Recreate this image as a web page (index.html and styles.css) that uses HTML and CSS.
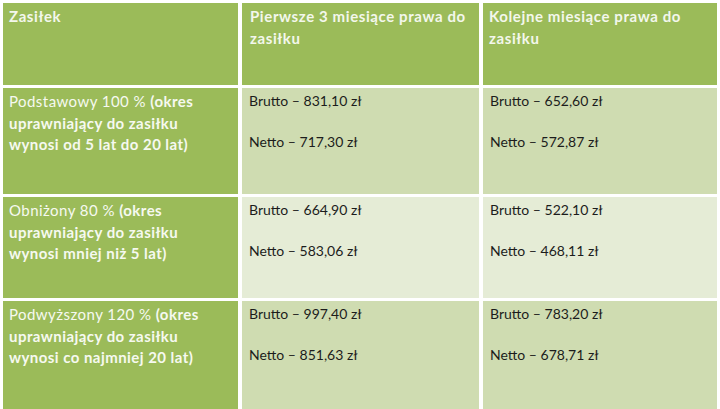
FILE: index.html
```html
<!DOCTYPE html>
<html lang="pl">
<head>
<meta charset="utf-8">
<link rel="stylesheet" href="styles.css">
</head>
<body>
<div class="table">
  <div class="cell head">Zasiłek</div>
  <div class="cell head">Pierwsze 3 miesiące prawa do zasiłku</div>
  <div class="cell head">Kolejne miesiące prawa do zasiłku</div>

  <div class="cell label">Podstawowy 100 % <b>(okres uprawniający do zasiłku wynosi od 5 lat do 20 lat)</b></div>
  <div class="cell data"><p>Brutto – 831,10 zł</p><p>Netto – 717,30 zł</p></div>
  <div class="cell data"><p>Brutto – 652,60 zł</p><p>Netto – 572,87 zł</p></div>

  <div class="cell label">Obniżony 80 % <b>(okres uprawniający do zasiłku wynosi mniej niż 5 lat)</b></div>
  <div class="cell data alt"><p>Brutto – 664,90 zł</p><p>Netto – 583,06 zł</p></div>
  <div class="cell data alt"><p>Brutto – 522,10 zł</p><p>Netto – 468,11 zł</p></div>

  <div class="cell label">Podwyższony 120 % <b>(okres uprawniający do zasiłku wynosi co najmniej 20 lat)</b></div>
  <div class="cell data"><p>Brutto – 997,40 zł</p><p>Netto – 851,63 zł</p></div>
  <div class="cell data"><p>Brutto – 783,20 zł</p><p>Netto – 678,71 zł</p></div>
</div>
</body>
</html>
```

FILE: styles.css
```css
html, body {
  margin: 0;
  padding: 0;
  background: #ffffff;
  overflow: hidden;
}
body {
  width: 720px;
  height: 409px;
  font-family: Lato, "Liberation Sans", sans-serif;
}
.table {
  display: grid;
  grid-template-columns: 235px 237px 234px;
  grid-template-rows: 82px 106px 101px 112px;
  column-gap: 4px;
  row-gap: 3px;
  padding: 3px 0 0 3px;
}
.cell {
  box-sizing: border-box;
}
.head {
  background: #9bbb59;
  color: #f3f7ec;
  font-weight: 700;
  font-size: 15px;
  letter-spacing: 0.6px;
  line-height: 22px;
  padding: 2px 6px 0 6px;
}
.head:nth-child(2) {
  padding-left: 8px;
}
.label {
  background: #9bbb59;
  color: #f6f9f0;
  font-size: 15px;
  letter-spacing: 0.45px;
  line-height: 21.5px;
  padding: 3px 12px 0 6px;
}
.label b {
  font-weight: 700;
}
.data {
  background: #cfdcb1;
  color: #1c1c1c;
  font-size: 14px;
  letter-spacing: 0;
  line-height: 20.5px;
  padding: 3px 6px 0 7px;
}
.data.alt {
  background: #e5ecd6;
}
.data p {
  margin: 0 0 20.5px 0;
}
```
